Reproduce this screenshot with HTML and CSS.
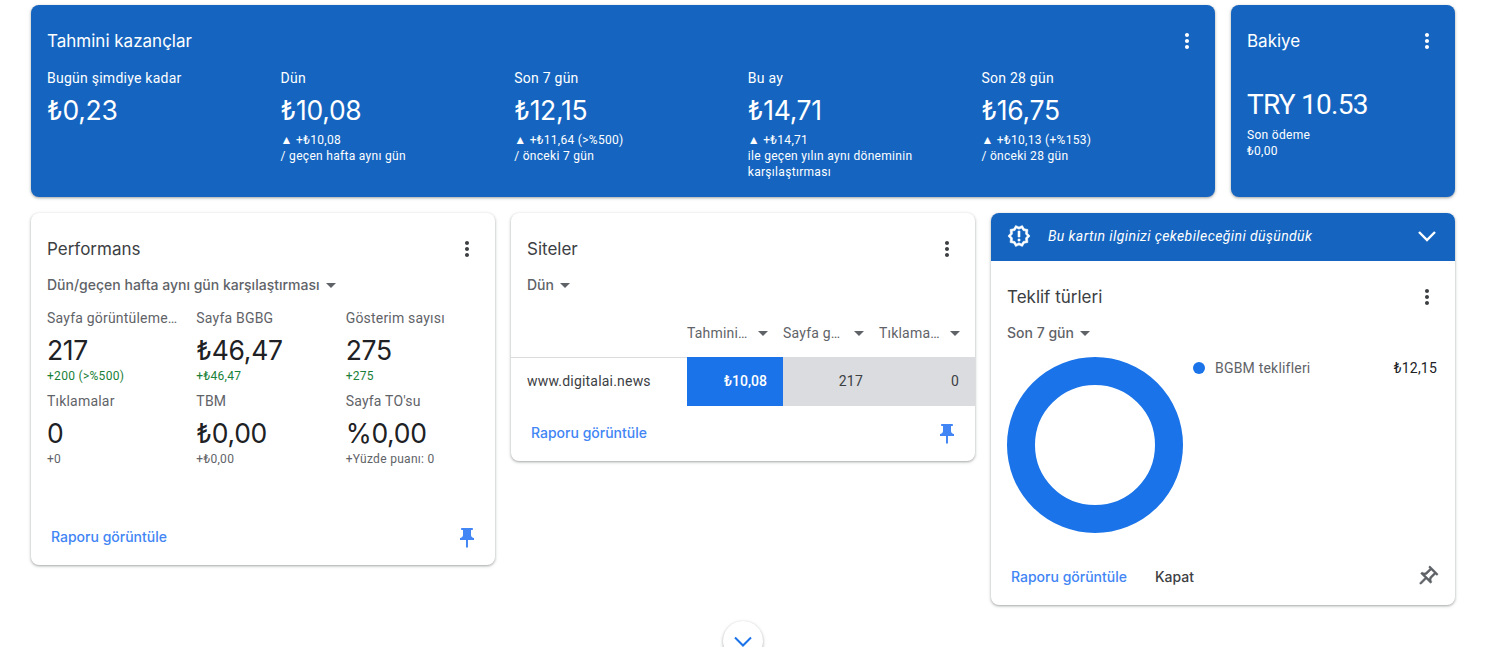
FILE: index.html
```html
<!DOCTYPE html>
<html lang="tr">
<head>
<meta charset="utf-8">
<title>AdSense</title>
<link rel="stylesheet" href="styles.css">
</head>
<body>
<svg class="defs" width="0" height="0" aria-hidden="true">
  <symbol id="dots" viewBox="0 0 24 24"><path d="M12 8c1.1 0 2-.9 2-2s-.9-2-2-2-2 .9-2 2 .9 2 2 2zm0 2c-1.1 0-2 .9-2 2s.9 2 2 2 2-.9 2-2-.9-2-2-2zm0 6c-1.1 0-2 .9-2 2s.9 2 2 2 2-.9 2-2-.9-2-2-2z"/></symbol>
  <symbol id="pin" viewBox="0 0 24 24"><path d="M16 9V4h1c.55 0 1-.45 1-1s-.45-1-1-1H7c-.55 0-1 .45-1 1s.45 1 1 1h1v5c0 1.66-1.34 3-3 3v2h5.97v7l1 1 1-1v-7H19v-2c-1.66 0-3-1.34-3-3z"/></symbol>
</svg>
<main class="page">
  <section class="top-row">
    <article class="card card-blue">
      <header class="card-head">
        <h2 class="title">Tahmini kazançlar</h2>
        <svg class="menu"><use href="#dots"/></svg>
      </header>
      <div class="earn-grid">
        <div class="earn">
          <div class="earn-label">Bugün şimdiye kadar</div>
          <div class="earn-value">₺0,23</div>
        </div>
        <div class="earn">
          <div class="earn-label">Dün</div>
          <div class="earn-value">₺10,08</div>
          <div class="earn-note">▲ +₺10,08<br>/ geçen hafta aynı gün</div>
        </div>
        <div class="earn">
          <div class="earn-label">Son 7 gün</div>
          <div class="earn-value">₺12,15</div>
          <div class="earn-note">▲ +₺11,64 (&gt;%500)<br>/ önceki 7 gün</div>
        </div>
        <div class="earn">
          <div class="earn-label">Bu ay</div>
          <div class="earn-value">₺14,71</div>
          <div class="earn-note">▲ +₺14,71<br>ile geçen yılın aynı döneminin karşılaştırması</div>
        </div>
        <div class="earn">
          <div class="earn-label">Son 28 gün</div>
          <div class="earn-value">₺16,75</div>
          <div class="earn-note">▲ +₺10,13 (+%153)<br>/ önceki 28 gün</div>
        </div>
      </div>
    </article>
    <article class="card card-blue balance">
      <header class="card-head">
        <h2 class="title">Bakiye</h2>
        <svg class="menu"><use href="#dots"/></svg>
      </header>
      <div class="balance-value">TRY 10.53</div>
      <div class="balance-note">Son ödeme<br>₺0,00</div>
    </article>
  </section>

  <section class="cards-row">
    <article class="card">
      <header class="card-head">
        <h2 class="title">Performans</h2>
        <svg class="menu"><use href="#dots"/></svg>
      </header>
      <div class="dropdown">Dün/geçen hafta aynı gün karşılaştırması<span class="caret"></span></div>
      <div class="metrics">
        <div class="metric">
          <div class="metric-label">Sayfa görüntüleme…</div>
          <div class="metric-value">217</div>
          <div class="metric-delta up">+200 (&gt;%500)</div>
        </div>
        <div class="metric">
          <div class="metric-label">Sayfa BGBG</div>
          <div class="metric-value">₺46,47</div>
          <div class="metric-delta up">+₺46,47</div>
        </div>
        <div class="metric">
          <div class="metric-label">Gösterim sayısı</div>
          <div class="metric-value">275</div>
          <div class="metric-delta up">+275</div>
        </div>
        <div class="metric">
          <div class="metric-label">Tıklamalar</div>
          <div class="metric-value">0</div>
          <div class="metric-delta">+0</div>
        </div>
        <div class="metric">
          <div class="metric-label">TBM</div>
          <div class="metric-value">₺0,00</div>
          <div class="metric-delta">+₺0,00</div>
        </div>
        <div class="metric">
          <div class="metric-label">Sayfa TO'su</div>
          <div class="metric-value">%0,00</div>
          <div class="metric-delta">+Yüzde puanı: 0</div>
        </div>
      </div>
      <footer class="card-foot perf-foot">
        <a class="link">Raporu görüntüle</a>
        <svg class="pin"><use href="#pin"/></svg>
      </footer>
    </article>

    <article class="card">
      <header class="card-head">
        <h2 class="title">Siteler</h2>
        <svg class="menu"><use href="#dots"/></svg>
      </header>
      <div class="dropdown">Dün<span class="caret"></span></div>
      <div class="table-head">
        <div class="th"><span class="th-text">Tahmini…</span><span class="caret"></span></div>
        <div class="th"><span class="th-text">Sayfa g…</span><span class="caret"></span></div>
        <div class="th"><span class="th-text">Tıklama…</span><span class="caret"></span></div>
      </div>
      <div class="table-row">
        <div class="site">www.digitalai.news</div>
        <div class="cell cell-primary">₺10,08</div>
        <div class="cell cell-grey cell-mid">217</div>
        <div class="cell cell-grey">0</div>
      </div>
      <footer class="card-foot">
        <a class="link">Raporu görüntüle</a>
        <svg class="pin"><use href="#pin"/></svg>
      </footer>
    </article>

    <article class="card">
      <div class="banner">
        <svg class="banner-icon" viewBox="0 0 24 24"><path d="M23 12l-2.44-2.78.34-3.68-3.61-.82-1.89-3.18L12 3 8.6 1.54 6.71 4.72l-3.61.81.34 3.68L1 12l2.44 2.78-.34 3.69 3.61.82 1.89 3.18L12 21l3.4 1.46 1.89-3.18 3.61-.82-.34-3.68L23 12zm-4.51 2.11.26 2.79-2.74.62-1.43 2.41L12 18.82l-2.58 1.11-1.43-2.41-2.74-.62.26-2.8L3.66 12l1.85-2.12-.26-2.78 2.74-.61 1.43-2.41L12 5.18l2.58-1.11 1.43 2.41 2.74.62-.26 2.79L20.34 12l-1.85 2.11zM11 15h2v2h-2zm0-8h2v6h-2z"/></svg>
        <span class="banner-text">Bu kartın ilginizi çekebileceğini düşündük</span>
        <svg class="banner-chevron" viewBox="0 0 24 24"><path d="M4 8l8 8 8-8"/></svg>
      </div>
      <header class="card-head">
        <h2 class="title">Teklif türleri</h2>
        <svg class="menu"><use href="#dots"/></svg>
      </header>
      <div class="dropdown">Son 7 gün<span class="caret"></span></div>
      <div class="chart-row">
        <div class="donut"></div>
        <div class="legend">
          <span class="legend-dot"></span>
          <span class="legend-label">BGBM teklifleri</span>
          <span class="legend-value">₺12,15</span>
        </div>
      </div>
      <footer class="card-foot">
        <div class="foot-links">
          <a class="link">Raporu görüntüle</a>
          <a class="link link-dark">Kapat</a>
        </div>
        <svg class="pin-outline" viewBox="0 0 24 24"><path d="M14 4v5c0 1.12.37 2.16 1 3H9c.65-.86 1-1.9 1-3V4h4m3-2H7c-.55 0-1 .45-1 1s.45 1 1 1h1v5c0 1.66-1.34 3-3 3v2h5.97v7l1 1 1-1v-7H19v-2c-1.66 0-3-1.34-3-3V4h1c.55 0 1-.45 1-1s-.45-1-1-1z"/></svg>
      </footer>
    </article>
  </section>

  <div class="more">
    <button class="more-btn" type="button" aria-label="Daha fazla">
      <svg viewBox="0 0 24 24"><path d="M4 8.5l8 8 8-8"/></svg>
    </button>
  </div>
</main>
</body>
</html>
```
FILE: styles.css
```css
* { box-sizing: border-box; }
html, body { margin: 0; height: 647px; overflow: hidden; background: #fff; }
body { font-family: Roboto, "Liberation Sans", sans-serif; color: #3c4043; }
.defs { position: absolute; }
.page { width: 1424px; margin-left: 31px; padding-top: 5px; }

.top-row { display: grid; grid-template-columns: 1184px 224px; gap: 16px; }
.cards-row { display: grid; grid-template-columns: repeat(3, 464px); gap: 16px; margin-top: 16px; align-items: start; }

.card { background: #fff; border-radius: 8px; overflow: hidden; box-shadow: 0 1px 2px rgba(60,64,67,.3), 0 1px 3px 1px rgba(60,64,67,.15); }
.card-blue { background: #1565c0; color: #fff; height: 192px; }

.card-head { display: flex; align-items: center; justify-content: space-between; height: 40px; margin: 16px 16px 0; }
.title { margin: 0; font: 400 17px/24px Inter, Roboto, sans-serif; letter-spacing: 0; color: #3c4043; }
.card-blue .title { color: #fff; }
.menu { width: 24px; height: 24px; fill: #3c4043; }
.card-blue .menu { fill: #fff; }

.earn-grid { display: grid; grid-template-columns: repeat(5, 233.6px); padding-left: 16px; margin-top: 5px; }
.earn-label { font-size: 14px; line-height: 24px; font-weight: 400; letter-spacing: .25px; }
.earn-value { font: 400 26.5px/40px Inter, Roboto, sans-serif; letter-spacing: -.3px; }
.earn-note { font-size: 12px; line-height: 16px; font-weight: 400; letter-spacing: .3px; width: 190px; margin-top: 2px; }

.balance-value { font: 400 28px/36px Roboto, sans-serif; letter-spacing: -.75px; margin: 26px 16px 0; }
.balance-note { font-size: 12px; line-height: 16px; font-weight: 400; letter-spacing: .3px; margin: 4px 16px 0; }

.dropdown { display: flex; align-items: center; margin: 4px 16px 0; height: 24px; font: 500 14px/24px Inter, Roboto, sans-serif; color: #5f6368; }
.caret { display: inline-block; width: 0; height: 0; margin-left: 6px; border: 5.5px solid transparent; border-top-color: #5f6368; border-bottom-width: 0; flex: none; }

.metrics { display: grid; grid-template-columns: repeat(3, 149.33px); margin: 9px 0 0 16px; }
.metric { height: 83px; }
.metric-label { font-size: 14px; line-height: 24px; letter-spacing: .2px; color: #5f6368; white-space: nowrap; }
.metric-value { font: 400 26.5px/40px Inter, Roboto, sans-serif; letter-spacing: -.3px; color: #202124; }
.metric-delta { font-size: 12px; line-height: 16px; letter-spacing: .3px; color: #5f6368; margin-top: -2px; }
.metric-delta.up { color: #188038; }

.card-foot { display: flex; align-items: center; justify-content: space-between; height: 56px; padding: 0 16px 0 20px; }
.perf-foot { margin-top: 37px; }
.link { font: 500 14px/24px Inter, Roboto, sans-serif; color: #4285f4; }
.link-dark { color: #3c4043; }
.foot-links { display: flex; gap: 28px; }
.pin { width: 24px; height: 24px; fill: #4285f4; margin-top: 2px; }
.pin-outline { width: 24px; height: 24px; fill: #5f6368; stroke: #5f6368; stroke-width: .5; transform: rotate(45deg); }

.table-head { display: grid; grid-template-columns: repeat(3, 96px); justify-content: end; height: 49px; margin-top: 12px; border-bottom: 1px solid #dadce0; }
.th { display: flex; align-items: center; font-size: 14px; letter-spacing: .2px; color: #5f6368; }
.th-text { width: 62px; white-space: nowrap; }
.th .caret { margin-left: 9px; }
.table-row { display: grid; grid-template-columns: 176px repeat(3, 96px); height: 48px; font-size: 14px; line-height: 49px; letter-spacing: .2px; margin-top: -1px; }
.site { padding-left: 16px; color: #3c4043; white-space: nowrap; }
.cell { text-align: right; padding-right: 16px; }
.cell-mid { padding-right: 16px; }
.cell-primary { background: #1a73e8; color: #fff; font-weight: 500; letter-spacing: 0; }
.cell-grey { background: #dadce0; color: #3c4043; }

.banner { display: flex; align-items: center; height: 48px; padding: 0 16px 2px; background: #1565c0; color: #fff; }
.banner-icon { width: 24px; height: 24px; fill: #fff; stroke: #fff; stroke-width: .6; margin-right: 17px; }
.banner-text { flex: 1; font-size: 14px; font-style: italic; font-weight: 400; letter-spacing: .4px; }
.banner-chevron { width: 24px; height: 24px; fill: none; stroke: #fff; stroke-width: 2.4; }

.chart-row { display: flex; padding: 0 18px 0 16px; margin: 12px 0 16px; }
.donut { width: 176px; height: 176px; border-radius: 50%; border: 28px solid #1a73e8; flex: none; }
.legend { flex: 1; display: flex; align-items: center; height: 24px; margin-top: -1px; font-size: 14px; letter-spacing: .2px; color: #5f6368; padding-left: 10px; }
.legend-dot { width: 12px; height: 12px; border-radius: 50%; background: #1a73e8; margin-right: 10px; }
.legend-label { flex: 1; }
.legend-value { color: #202124; }

.more { display: flex; justify-content: center; margin-top: 16px; width: 1424px; }
.more-btn { width: 40px; height: 40px; padding: 8px; border: 0; border-radius: 50%; background: #fff; box-shadow: 0 1px 2px rgba(60,64,67,.3), 0 1px 3px 1px rgba(60,64,67,.15); }
.more-btn svg { display: block; width: 24px; height: 24px; fill: none; stroke: #1a73e8; stroke-width: 2; }
```
